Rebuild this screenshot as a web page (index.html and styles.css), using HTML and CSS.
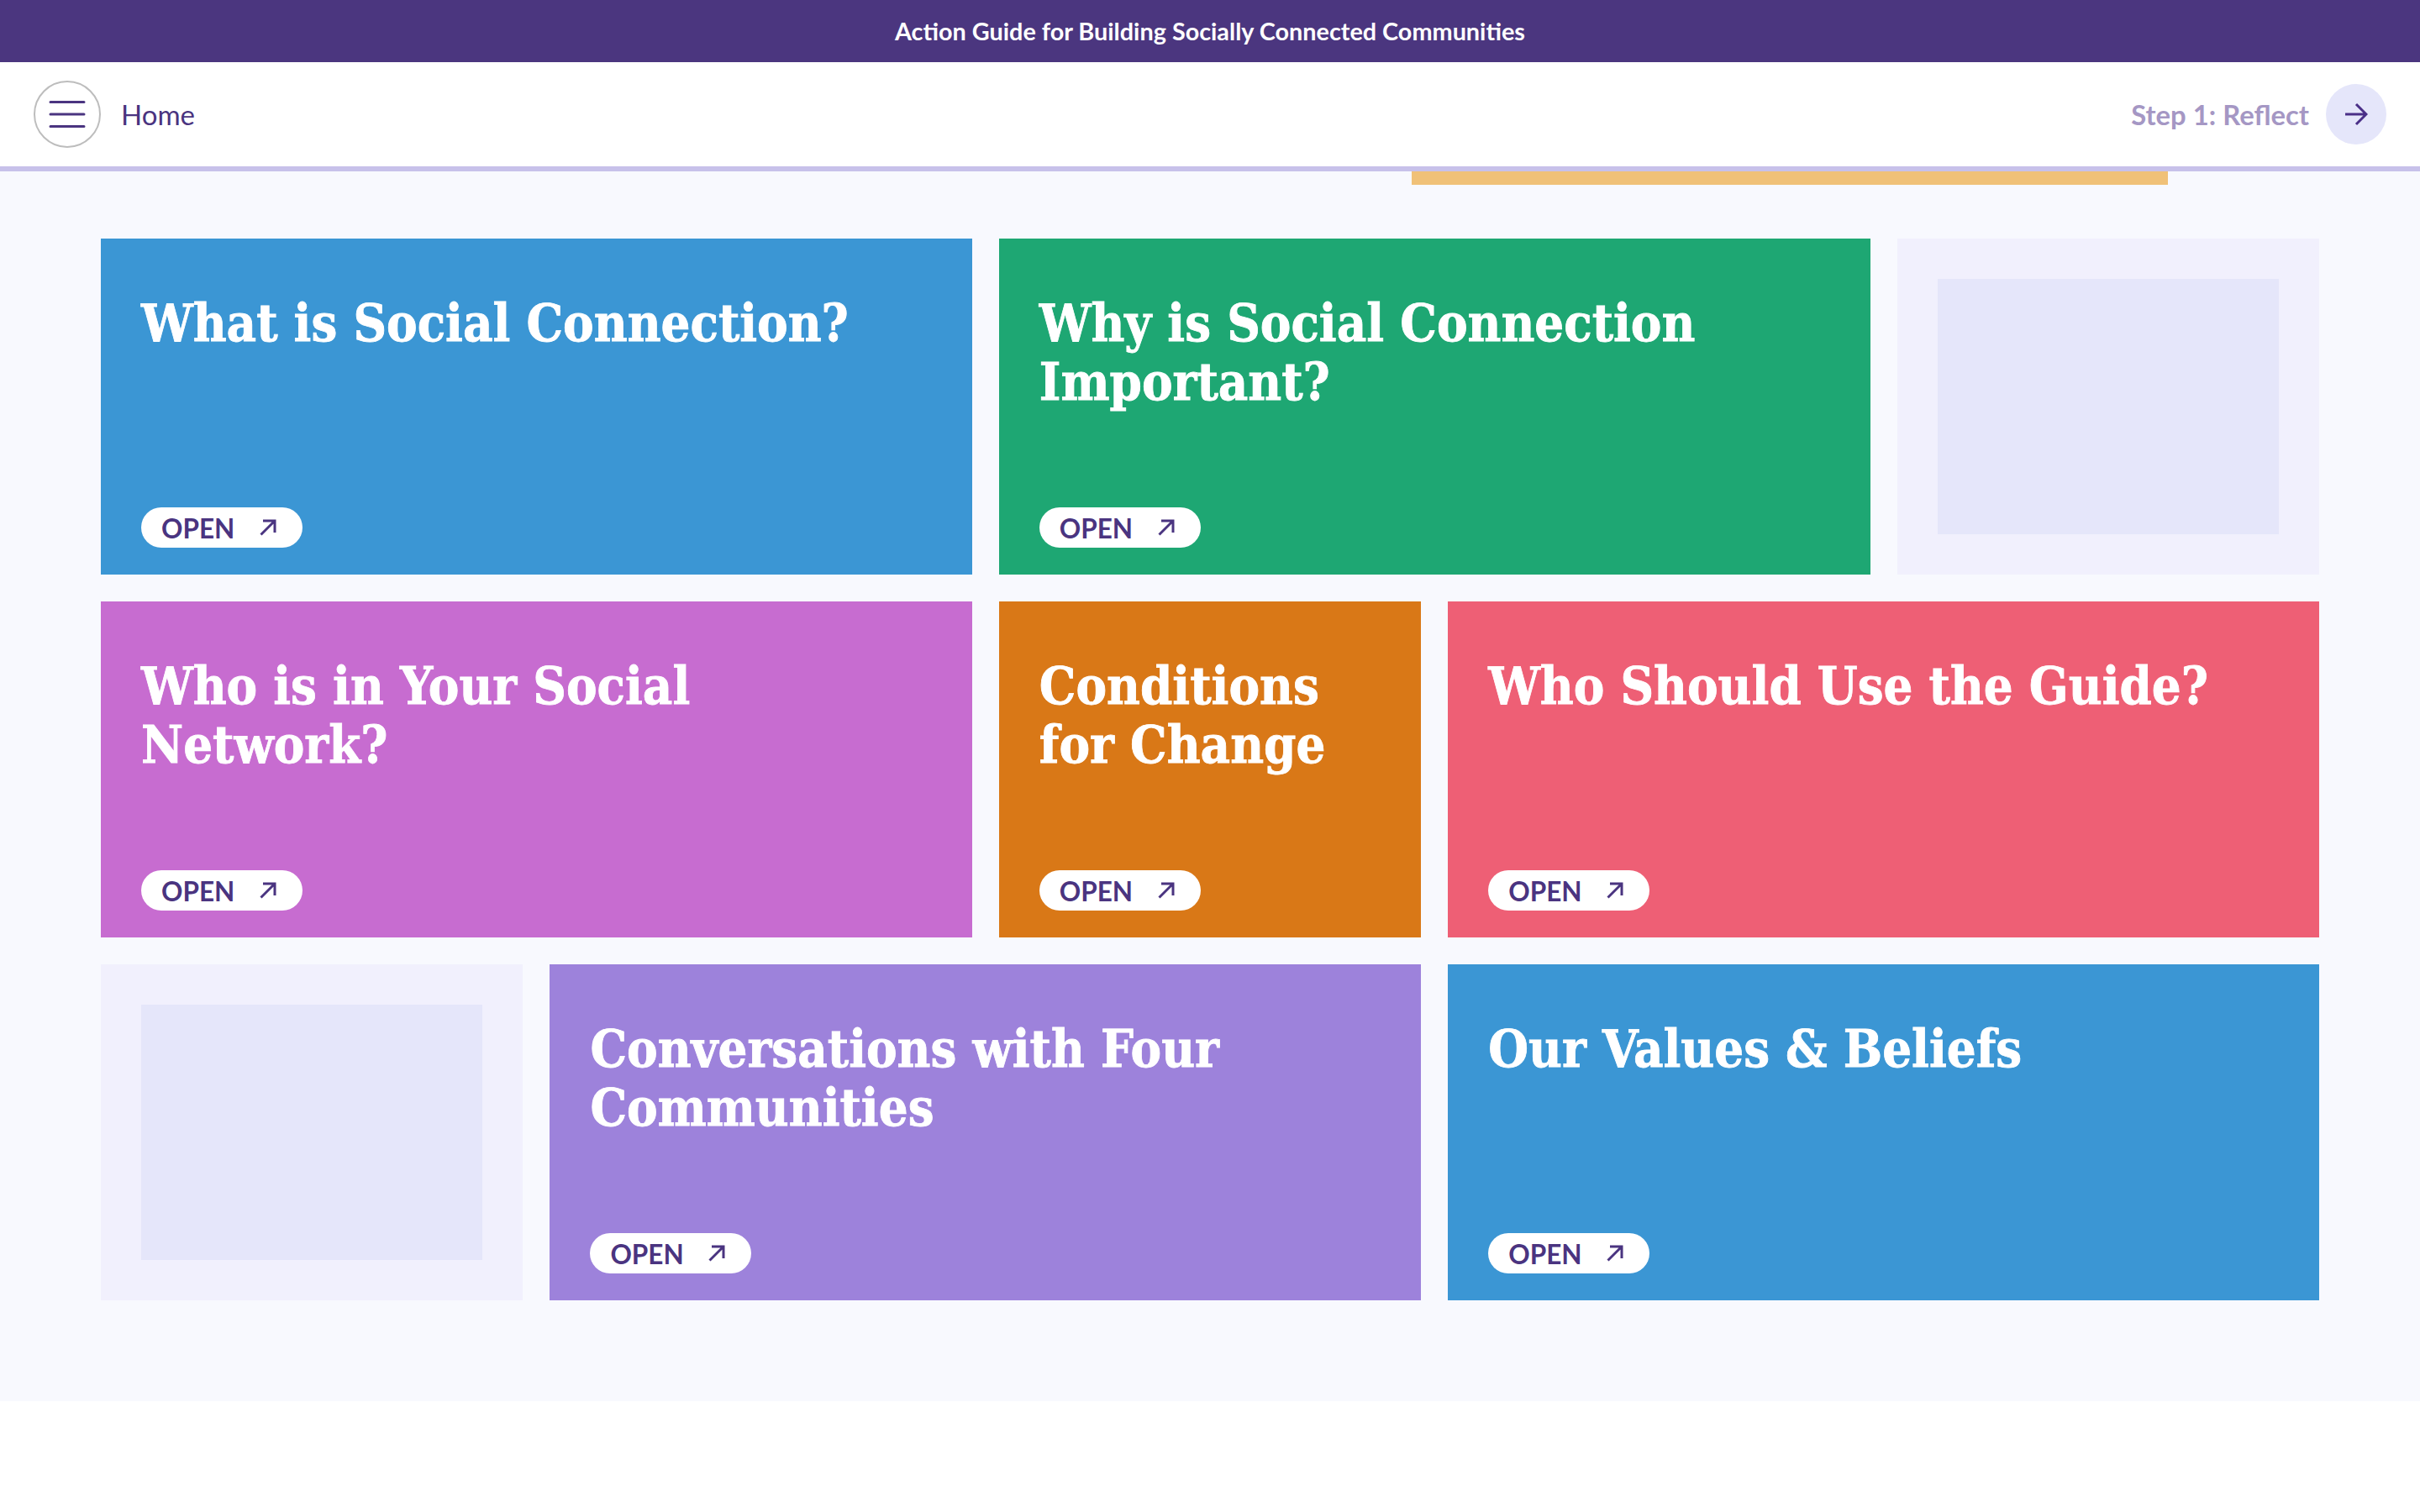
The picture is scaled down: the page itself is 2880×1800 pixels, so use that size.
FILE: index.html
```html
<!DOCTYPE html>
<html lang="en">
<head>
<meta charset="utf-8">
<title>Action Guide for Building Socially Connected Communities</title>
<link rel="stylesheet" href="styles.css">
</head>
<body>
<header class="banner">Action Guide for Building Socially Connected Communities</header>
<nav class="nav">
  <div class="nav-left">
    <button class="menu-btn" aria-label="Menu">
      <svg width="44" height="36" viewBox="0 0 44 36"><path d="M2 3.5H42M2 18H42M2 32.5H42" fill="none" stroke="#4a3480" stroke-width="3" stroke-linecap="round"/></svg>
    </button>
    <span class="home">Home</span>
  </div>
  <div class="nav-right">
    <span class="step">Step 1: Reflect</span>
    <span class="next">
      <svg width="28" height="28" viewBox="0 0 28 28"><path d="M1 14H26M14 2L26 14L14 26" fill="none" stroke="#4a2f87" stroke-width="3"/></svg>
    </span>
  </div>
</nav>
<main class="main">
  <div class="progress"></div>
  <section class="grid">
    <a class="card span2 blue"><h2>What is Social Connection?</h2><span class="open">OPEN<svg class="up" viewBox="0 0 20 20"><path d="M1.5 18.5L18 2M4 2H18V16" fill="none" stroke="#4a3480" stroke-width="3"/></svg></span></a>
    <a class="card span2 green"><h2>Why is Social Connection Important?</h2><span class="open">OPEN<svg class="up" viewBox="0 0 20 20"><path d="M1.5 18.5L18 2M4 2H18V16" fill="none" stroke="#4a3480" stroke-width="3"/></svg></span></a>
    <div class="blank"><div class="blank-inner"></div></div>
    <a class="card span2 magenta"><h2>Who is in Your Social Network?</h2><span class="open">OPEN<svg class="up" viewBox="0 0 20 20"><path d="M1.5 18.5L18 2M4 2H18V16" fill="none" stroke="#4a3480" stroke-width="3"/></svg></span></a>
    <a class="card orange"><h2>Conditions for Change</h2><span class="open">OPEN<svg class="up" viewBox="0 0 20 20"><path d="M1.5 18.5L18 2M4 2H18V16" fill="none" stroke="#4a3480" stroke-width="3"/></svg></span></a>
    <a class="card span2 pink"><h2>Who Should Use the Guide?</h2><span class="open">OPEN<svg class="up" viewBox="0 0 20 20"><path d="M1.5 18.5L18 2M4 2H18V16" fill="none" stroke="#4a3480" stroke-width="3"/></svg></span></a>
    <div class="blank"><div class="blank-inner"></div></div>
    <a class="card span2 purple"><h2>Conversations with Four Communities</h2><span class="open">OPEN<svg class="up" viewBox="0 0 20 20"><path d="M1.5 18.5L18 2M4 2H18V16" fill="none" stroke="#4a3480" stroke-width="3"/></svg></span></a>
    <a class="card span2 blue"><h2>Our Values &amp; Beliefs</h2><span class="open">OPEN<svg class="up" viewBox="0 0 20 20"><path d="M1.5 18.5L18 2M4 2H18V16" fill="none" stroke="#4a3480" stroke-width="3"/></svg></span></a>
  </section>
</main>
</body>
</html>
```
FILE: styles.css
```css
* { box-sizing: border-box; }
html, body { margin: 0; padding: 0; background: #fff; }
body { font-family: Lato, "Noto Sans", sans-serif; color: #4a3480; }
.banner {
  height: 74px;
  background: #4b367f;
  color: #fff;
  display: flex;
  align-items: center;
  justify-content: center;
  font-size: 28.8px;
  font-weight: 700;
}
.nav {
  height: 130px;
  border-bottom: 6px solid #c7c1ea;
  background: #fff;
  display: flex;
  align-items: center;
  justify-content: space-between;
  padding: 0 40px;
}
.nav-left, .nav-right { display: flex; align-items: center; }
.menu-btn {
  width: 80px;
  height: 80px;
  border: 2px solid #bdbdbd;
  border-radius: 50%;
  background: #fff;
  padding: 0;
  display: flex;
  align-items: center;
  justify-content: center;
}
.home { margin-left: 24px; font-size: 33px; color: #4a3480; }
.step { font-size: 32.8px; font-weight: 700; color: #a597c4; }
.next {
  width: 72px;
  height: 72px;
  margin-left: 20px;
  border-radius: 50%;
  background: #e5e6fa;
  display: flex;
  align-items: center;
  justify-content: center;
}
.main { background: #f8f9fe; padding-bottom: 120px; }
.progress { height: 16px; width: 31.25%; margin-left: 58.33%; background: #f0c178; }
.grid {
  margin-top: 64px;
  padding: 0 120px;
  display: grid;
  grid-template-columns: repeat(5, 1fr);
  grid-auto-rows: 400px;
  gap: 32px;
}
.card {
  display: flex;
  flex-direction: column;
  align-items: flex-start;
  justify-content: space-between;
  padding: 66px 48px 32px;
  color: #fff;
}
.span2 { grid-column: span 2; }
.card h2 {
  margin: 0;
  font-family: "DejaVu Serif Condensed", "DejaVu Serif", serif;
  font-size: 61px;
  line-height: 70px;
  font-weight: 700;
  -webkit-text-stroke: 0.8px #fff;
}
.open {
  width: 192px;
  height: 48px;
  border-radius: 24px;
  background: #fff;
  color: #4a3480;
  display: flex;
  align-items: center;
  justify-content: space-between;
  padding: 1px 31px 0 24px;
  font-size: 31.5px;
  font-weight: 700;
}
.up { width: 20px; height: 20px; margin-top: -1px; }
.blank { background: #f1f0fd; padding: 48px; }
.blank-inner { height: 100%; background: #e5e6fa; }
.blue { background: #3b96d4; }
.green { background: #1ea773; }
.magenta { background: #c76cd0; }
.orange { background: #d97817; }
.pink { background: #ee5f75; }
.purple { background: #9d82db; }
```
